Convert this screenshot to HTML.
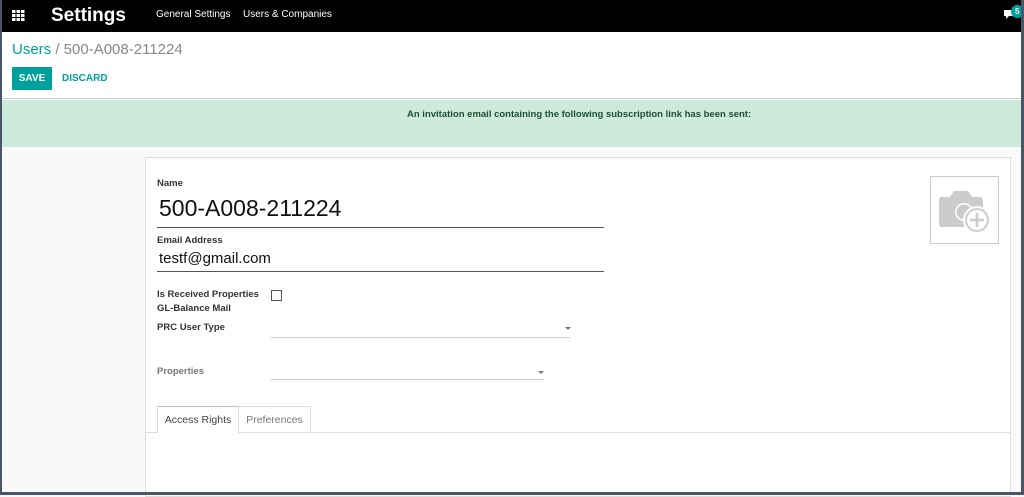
<!DOCTYPE html>
<html><head><style>
*{box-sizing:border-box;margin:0;padding:0}
body{width:1024px;height:495px;overflow:hidden;font-family:"Liberation Sans",sans-serif;background:#f9f9f9;position:relative}
.abs{position:absolute}
.frameL{left:0;top:0;width:2px;height:495px;background:#4a5568}
.frameR{left:1021px;top:0;width:3px;height:495px;background:#4a5568}
.frameB{left:0;top:492px;width:1024px;height:3px;background:#4a5568}
.nav{left:0;top:0;width:1024px;height:32px;background:#000;color:#fff}
.lbl{font-size:9.5px;font-weight:bold;color:#333}
</style></head><body>
<div class="abs nav">
 <svg class="abs" style="left:12px;top:10px" width="13" height="11"><g fill="#fff"><rect x="0" y="0" width="3.5" height="3"/><rect x="4.5" y="0" width="3.5" height="3"/><rect x="9" y="0" width="3.5" height="3"/><rect x="0" y="4" width="3.5" height="3"/><rect x="4.5" y="4" width="3.5" height="3"/><rect x="9" y="4" width="3.5" height="3"/><rect x="0" y="8" width="3.5" height="3"/><rect x="4.5" y="8" width="3.5" height="3"/><rect x="9" y="8" width="3.5" height="3"/></g></svg>
 <div class="abs" style="left:51px;top:5px;font-size:19px;font-weight:bold">Settings</div>
 <div class="abs" style="left:156px;top:9px;font-size:10px">General Settings</div>
 <div class="abs" style="left:243px;top:9px;font-size:10px">Users &amp; Companies</div>
 <svg class="abs" style="left:1003px;top:9px" width="13" height="12"><path d="M1 1h10v6h-5l-3 3v-3h-2z" fill="#fff"/></svg>
 <div class="abs" style="left:1011px;top:5px;width:13px;height:13px;border-radius:7px;background:#00a09d;color:#fff;font-size:8px;font-weight:bold;padding-left:4px;line-height:13px">5</div>
</div>
<div class="abs" style="left:0;top:32px;width:1024px;height:67px;background:#fff;border-bottom:1px solid #ccc"></div>
<div class="abs" style="left:12px;top:41px;font-size:15px;color:#888"><span style="color:#00a09d">Users</span> / 500-A008-211224</div>
<div class="abs" style="left:12px;top:67px;width:40px;height:23px;background:#00a09d;color:#fff;font-size:10px;font-weight:bold;text-align:center;line-height:23px">SAVE</div>
<div class="abs" style="left:62px;top:73px;font-size:10px;font-weight:bold;color:#00a09d">DISCARD</div>
<div class="abs" style="left:0;top:100px;width:1024px;height:47px;background:#cdebdc"></div>
<div class="abs" style="left:407px;top:109px;font-size:9.5px;font-weight:bold;color:#1d4f33">An invitation email containing the following subscription link has been sent:</div>
<div class="abs" style="left:145px;top:157px;width:866px;height:340px;background:#fff;border:1px solid #ddd"></div>
<div class="abs" style="left:930px;top:176px;width:69px;height:68px;border:1px solid #ccc"></div>
<svg class="abs" style="left:937px;top:185px" width="58" height="52"><path d="M2 15q0-3 3-3h8l4-6h14l4 6h8q3 0 3 3v24q0 3-3 3h-38q-3 0-3-3z" fill="#ccc"/><circle cx="27" cy="27" r="9" fill="#fff"/><circle cx="27" cy="27" r="7.5" fill="#ccc"/><circle cx="40" cy="35" r="14" fill="#fff"/><circle cx="40" cy="35" r="12" fill="#ccc"/><circle cx="40" cy="35" r="10" fill="#fff"/><path d="M40 28v14M33 35h14" stroke="#ccc" stroke-width="2.8"/></svg>
<div class="abs lbl" style="left:157px;top:178px">Name</div>
<div class="abs" style="left:159px;top:195px;font-size:23px;color:#111">500-A008-211224</div>
<div class="abs" style="left:157px;top:227px;width:447px;height:1px;background:#555"></div>
<div class="abs lbl" style="left:157px;top:235px">Email Address</div>
<div class="abs" style="left:159px;top:250px;font-size:15px;color:#111">testf@gmail.com</div>
<div class="abs" style="left:157px;top:271px;width:447px;height:1px;background:#555"></div>
<div class="abs lbl" style="left:157px;top:289px">Is Received Properties</div>
<div class="abs" style="left:271px;top:290px;width:11px;height:11px;border:1px solid #555"></div>
<div class="abs lbl" style="left:157px;top:303px">GL-Balance Mail</div>
<div class="abs lbl" style="left:157px;top:322px">PRC User Type</div>
<div class="abs" style="left:271px;top:337px;width:299px;height:1px;background:#ccc"></div>
<div class="abs" style="left:565px;top:327px;border:3px solid transparent;border-top:3px solid #777"></div>
<div class="abs" style="left:157px;top:366px;font-size:9.5px;font-weight:bold;color:#777">Properties</div>
<div class="abs" style="left:271px;top:379px;width:273px;height:1px;background:#ccc"></div>
<div class="abs" style="left:538px;top:371px;border:3px solid transparent;border-top:3px solid #777"></div>
<div class="abs" style="left:145px;top:432px;width:866px;height:1px;background:#ddd"></div>
<div class="abs" style="left:157px;top:406px;width:82px;height:27px;background:#fff;border:1px solid #ddd;border-top-color:#c9b8c6;border-bottom:none;font-size:10.5px;color:#444;text-align:center;line-height:26px">Access Rights</div>
<div class="abs" style="left:238px;top:406px;width:73px;height:26px;border:1px solid #ddd;border-bottom:none;font-size:10.5px;color:#777;text-align:center;line-height:26px">Preferences</div>
<div class="abs frameL"></div><div class="abs frameR"></div><div class="abs frameB"></div>
</body></html>
